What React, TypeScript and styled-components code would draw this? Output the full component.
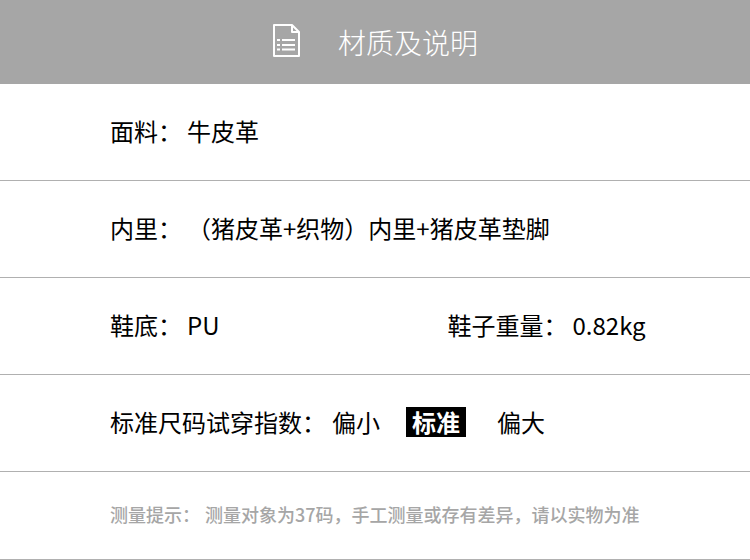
import React from "react";
import styled, { createGlobalStyle } from "styled-components";

const Global = createGlobalStyle`
  html, body { margin: 0; padding: 0; background: #fff; overflow: hidden; }
  body { font-family: "Noto Sans CJK SC", "Noto Sans", sans-serif; }
`;
const Page = styled.div`width: 750px; height: 560px; overflow: hidden;`;
const Header = styled.div`
  height: 84px; background: #a6a6a6; color: #fff; display: flex; align-items: center;
  justify-content: center; gap: 38px; font-size: 28px; font-weight: 300;
`;
const Row = styled.div`
  height: 93px; padding-left: 110px; padding-bottom: 3px; border-bottom: 1px solid #b0b0b0;
  display: flex; align-items: center; font-size: 24px; color: #000; white-space: pre;
`;
const FootRow = styled(Row)`
  height: 83px; padding-bottom: 4px; font-size: 18px; font-weight: 500; color: #a6a6a6;
`;
const Cell = styled.span<{ $w?: number }>`
  display: inline-block; width: ${p => (p.$w ? `${p.$w}px` : "auto")};
`;
const Label = styled.span<{ $gap?: number }>`margin-right: ${p => p.$gap ?? 5}px;`;
const Size = styled.span<{ $on?: boolean }>`
  display: inline-flex; align-items: center; justify-content: center; height: 30px;
  padding: 0 ${p => (p.$on ? "6px" : "0")};
  margin-right: ${p => (p.$on ? "31px" : "26px")}; font-weight: ${p => (p.$on ? 700 : 400)};
  background: ${p => (p.$on ? "#000" : "transparent")}; color: ${p => (p.$on ? "#fff" : "#000")};
`;
const Doc = () => (
  <svg width="28" height="36" viewBox="0 0 28 36" fill="none" stroke="#fff" strokeWidth="2">
    <path d="M2 1h18l7 7v24H2z" strokeLinejoin="round" />
    <path d="M20 1v7h7" strokeLinejoin="round" />
    <path d="M5 16h3M10 16h13M5 21h3M10 21h13M5 25.5h3M10 25.5h13" />
  </svg>
);
export default function App() {
  return (
    <Page>
      <Global />
      <Header><Doc /><span>材质及说明</span></Header>
      <Row><Label>面料：</Label>牛皮革</Row>
      <Row><Label>内里：</Label>（猪皮革+织物）内里+猪皮革垫脚</Row>
      <Row><Cell $w={337.5}><Label>鞋底：</Label>PU</Cell><Label>鞋子重量：</Label>0.82kg</Row>
      <Row><Label $gap={6}>标准尺码试穿指数：</Label><Size>偏小</Size><Size $on>标准</Size><Size>偏大</Size></Row>
      <FootRow><Label>测量提示：</Label>测量对象为37码，手工测量或存有差异，请以实物为准</FootRow>
    </Page>
  );
}
